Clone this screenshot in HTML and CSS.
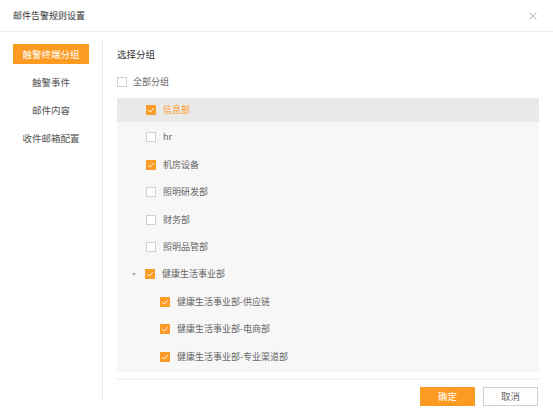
FILE: index.html
```html
<!DOCTYPE html>
<html lang="zh">
<head>
<meta charset="utf-8">
<title>邮件告警规则设置</title>
<link rel="stylesheet" href="styles.css">
</head>
<body>
<div class="dialog">
  <div class="header">
    <span class="title">邮件告警规则设置</span>
    <span class="close">
      <svg width="8" height="8" viewBox="0 0 8 8"><path d="M0.5 0.5L7.5 7.5M7.5 0.5L0.5 7.5" stroke="#a8a8a8" stroke-width="0.9" fill="none"/></svg>
    </span>
  </div>
  <div class="main">
    <div class="sidebar">
      <div class="menu-item active">触警终端分组</div>
      <div class="menu-item">触警事件</div>
      <div class="menu-item">邮件内容</div>
      <div class="menu-item">收件邮箱配置</div>
    </div>
    <div class="content">
      <div class="section-title">选择分组</div>
      <div class="all-row">
        <span class="cb"></span><span class="label">全部分组</span>
      </div>
      <div class="list">
        <div class="row selected lvl1"><span class="cb checked"><svg viewBox="0 0 10 10"><path d="M2.2 5.2L4.2 7L7.8 3.2" stroke="#fff" stroke-width="0.9" fill="none"/></svg></span><span class="label orange">信息部</span></div>
        <div class="row lvl1"><span class="cb"></span><span class="label">hr</span></div>
        <div class="row lvl1"><span class="cb checked"><svg viewBox="0 0 10 10"><path d="M2.2 5.2L4.2 7L7.8 3.2" stroke="#fff" stroke-width="0.9" fill="none"/></svg></span><span class="label">机房设备</span></div>
        <div class="row lvl1"><span class="cb"></span><span class="label">照明研发部</span></div>
        <div class="row lvl1"><span class="cb"></span><span class="label">财务部</span></div>
        <div class="row lvl1"><span class="cb"></span><span class="label">照明品管部</span></div>
        <div class="row lvl1 parent"><span class="arrow"></span><span class="cb checked"><svg viewBox="0 0 10 10"><path d="M2.2 5.2L4.2 7L7.8 3.2" stroke="#fff" stroke-width="0.9" fill="none"/></svg></span><span class="label">健康生活事业部</span></div>
        <div class="row lvl2"><span class="cb checked"><svg viewBox="0 0 10 10"><path d="M2.2 5.2L4.2 7L7.8 3.2" stroke="#fff" stroke-width="0.9" fill="none"/></svg></span><span class="label">健康生活事业部-供应链</span></div>
        <div class="row lvl2"><span class="cb checked"><svg viewBox="0 0 10 10"><path d="M2.2 5.2L4.2 7L7.8 3.2" stroke="#fff" stroke-width="0.9" fill="none"/></svg></span><span class="label">健康生活事业部-电商部</span></div>
        <div class="row lvl2"><span class="cb checked"><svg viewBox="0 0 10 10"><path d="M2.2 5.2L4.2 7L7.8 3.2" stroke="#fff" stroke-width="0.9" fill="none"/></svg></span><span class="label">健康生活事业部-专业渠道部</span></div>
      </div>
      <div class="sep"></div>
      <div class="footer">
        <button class="btn primary">确定</button>
        <button class="btn">取消</button>
      </div>
    </div>
  </div>
</div>
</body>
</html>
```

FILE: styles.css
```css
* { box-sizing: border-box; }
html, body {
  margin: 0;
  padding: 0;
  background: #fff;
  font-family: "Noto Sans CJK SC", "Noto Sans", sans-serif;
}
.dialog {
  width: 553px;
  height: 414px;
}
.header {
  height: 32px;
  border-bottom: 1px solid #ececec;
  display: flex;
  align-items: center;
  justify-content: space-between;
  padding: 0 16px 0 13px;
}
.title {
  font-size: 9px;
  color: #333;
  line-height: 31px;
}
.close {
  display: flex;
  width: 8px;
  height: 8px;
}
.main {
  display: flex;
  align-items: flex-start;
}
.sidebar {
  width: 103px;
  margin-top: 8px;
  height: 359px;
  padding: 4px 0 0 13px;
  border-right: 1px solid #e9e9e9;
}
.menu-item {
  width: 76px;
  height: 20px;
  line-height: 20px;
  margin-bottom: 8px;
  text-align: center;
  font-size: 9.5px;
  color: #555;
}
.menu-item.active {
  background: #fd9a22;
  color: #fff;
}
.content {
  flex: 1;
  padding: 12px 14px 0 14px;
}
.section-title {
  height: 20px;
  line-height: 20px;
  font-size: 9.5px;
  color: #333;
}
.all-row {
  margin-top: 8px;
  height: 20px;
  display: flex;
  align-items: center;
}
.all-row .label {
  margin-left: 6px;
}
.cb {
  width: 10px;
  height: 10px;
  border: 1px solid #d2d2d2;
  background: #fff;
  display: inline-flex;
  flex-shrink: 0;
}
.cb.checked {
  background: #fd9b27;
  border-color: #fd9b27;
}
.cb svg {
  width: 10px;
  height: 10px;
  margin: -1px;
}
.label {
  font-size: 9px;
  color: #666;
  line-height: 12px;
}
.label.orange {
  color: #fd9a22;
}
.list {
  margin-top: 6px;
  background: #f7f7f7;
  padding-bottom: 0.4px;
}
.row {
  height: 24px;
  margin-bottom: 3.4px;
  display: flex;
  align-items: center;
}
.row.selected {
  background: #e9e9e9;
}
.row .label {
  margin-left: 7px;
}
.lvl1 {
  padding-left: 29px;
}
.lvl2 {
  padding-left: 43px;
}
.row.parent {
  padding-left: 15px;
}
.arrow {
  width: 0;
  height: 0;
  border-left: 2.5px solid transparent;
  border-right: 2.5px solid transparent;
  border-top: 3px solid #aaa;
  margin-right: 9px;
}
.sep {
  margin-top: 6px;
  height: 2px;
  background: #f4f4f4;
}
.footer {
  margin-top: 7px;
  display: flex;
  justify-content: flex-end;
  gap: 8px;
  padding-right: 1px;
}
.btn {
  width: 55px;
  height: 19px;
  padding: 0;
  border: 1px solid #cfcfcf;
  background: #fff;
  color: #666;
  font-family: "Noto Sans CJK SC", "Noto Sans", sans-serif;
  font-size: 9.5px;
  line-height: 17px;
}
.btn.primary {
  background: #fd9a22;
  border-color: #fd9a22;
  color: #fff;
}
```
